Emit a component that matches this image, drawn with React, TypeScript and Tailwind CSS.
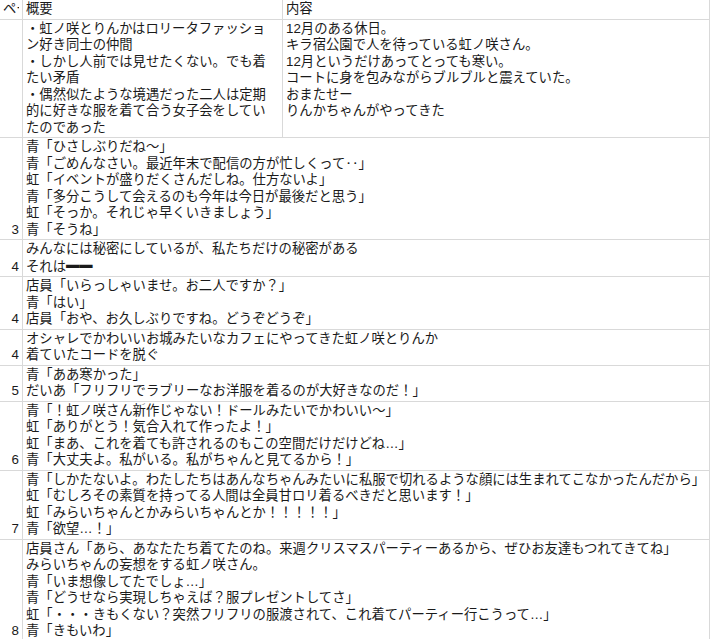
import React from "react";

type Row = { n: string; lines: React.ReactNode[] };

const rows: Row[] = [
  {
    n: "3",
    lines: [
      "青「ひさしぶりだね～」",
      "青「ごめんなさい。最近年末で配信の方が忙しくって‥」",
      "虹「イベントが盛りだくさんだしね。仕方ないよ」",
      "青「多分こうして会えるのも今年は今日が最後だと思う」",
      "虹「そっか。それじゃ早くいきましょう」",
      "青「そうね」",
    ],
  },
  {
    n: "4",
    lines: [
      "みんなには秘密にしているが、私たちだけの秘密がある",
      <>
        それは
        <span className="inline-block scale-y-[2] font-['Noto_Sans_CJK_JP',sans-serif] font-bold">━━</span>
      </>,
    ],
  },
  {
    n: "4",
    lines: [
      "店員「いらっしゃいませ。お二人ですか？」",
      "青「はい」",
      "店員「おや、お久しぶりですね。どうぞどうぞ」",
    ],
  },
  {
    n: "4",
    lines: [
      "オシャレでかわいいお城みたいなカフェにやってきた虹ノ咲とりんか",
      "着ていたコードを脱ぐ",
    ],
  },
  {
    n: "5",
    lines: ["青「ああ寒かった」", "だいあ「フリフリでラブリーなお洋服を着るのが大好きなのだ！」"],
  },
  {
    n: "6",
    lines: [
      "青「！虹ノ咲さん新作じゃない！ドールみたいでかわいい～」",
      "虹「ありがとう！気合入れて作ったよ！」",
      "虹「まあ、これを着ても許されるのもこの空間だけだけどね…」",
      "青「大丈夫よ。私がいる。私がちゃんと見てるから！」",
    ],
  },
  {
    n: "7",
    lines: [
      "青「しかたないよ。わたしたちはあんなちゃんみたいに私服で切れるような顔には生まれてこなかったんだから」",
      "虹「むしろその素質を持ってる人間は全員甘ロリ着るべきだと思います！」",
      "虹「みらいちゃんとかみらいちゃんとか！！！！！」",
      "青「欲望…！」",
    ],
  },
  {
    n: "8",
    lines: [
      "店員さん「あら、あなたたち着てたのね。来週クリスマスパーティーあるから、ぜひお友達もつれてきてね」",
      "みらいちゃんの妄想をする虹ノ咲さん。",
      "青「いま想像してたでしょ…」",
      "青「どうせなら実現しちゃえば？服プレゼントしてさ」",
      "虹「・・・きもくない？突然フリフリの服渡されて、これ着てパーティー行こうって…」",
      "青「きもいわ」",
    ],
  },
];

const summary = [
  "・虹ノ咲とりんかはロリータファッショ",
  "ン好き同士の仲間",
  "・しかし人前では見せたくない。でも着",
  "たい矛盾",
  "・偶然似たような境遇だった二人は定期",
  "的に好きな服を着て合う女子会をしてい",
  "たのであった",
];

const content = [
  "12月のある休日。",
  "キラ宿公園で人を待っている虹ノ咲さん。",
  "12月というだけあってとっても寒い。",
  "コートに身を包みながらブルブルと震えていた。",
  "おまたせー",
  "りんかちゃんがやってきた",
];

function Lines({ lines }: { lines: React.ReactNode[] }) {
  return (
    <>
      {lines.map((l, i) => (
        <div key={i} className="whitespace-nowrap">
          {l}
        </div>
      ))}
    </>
  );
}

export default function App() {
  return (
    <div className="w-[712px] h-[639px] overflow-hidden bg-white text-[#1a1a1a] font-['Liberation_Sans','Noto_Sans_CJK_JP',sans-serif] text-[13.33px] leading-[16.5px]">
      <div className="grid grid-cols-[23px_260px_427px] w-[710px]">
        {/* header */}
        <div className="border-r border-b border-[#d9d9d9] pl-[3px] pt-[1px] pb-[1px] overflow-hidden">
          <div className="w-[16px] overflow-hidden whitespace-nowrap">ページ</div>
        </div>
        <div className="border-r border-b border-[#d9d9d9] pl-[3px] pt-[1px] pb-[1px]">概要</div>
        <div className="border-r border-b border-[#d9d9d9] pl-[3px] pt-[1px] pb-[1px]">内容</div>

        {/* row 2 */}
        <div className="border-r border-b border-[#d9d9d9]"></div>
        <div className="border-r border-b border-[#d9d9d9] pl-[3px] pt-[1px] pb-[1px] overflow-hidden">
          <Lines lines={summary} />
        </div>
        <div className="border-r border-b border-[#d9d9d9] pl-[3px] pt-[1px] pb-[1px] overflow-hidden">
          <Lines lines={content} />
        </div>

        {rows.map((r, i) => (
          <React.Fragment key={i}>
            <div className="border-r border-b border-[#d9d9d9] flex items-end justify-end pr-[3px] pb-[1px]">
              {r.n}
            </div>
            <div className="col-span-2 border-r border-b border-[#d9d9d9] pl-[3px] pt-[1px] pb-[1px] overflow-hidden">
              <Lines lines={r.lines} />
            </div>
          </React.Fragment>
        ))}
      </div>
    </div>
  );
}
